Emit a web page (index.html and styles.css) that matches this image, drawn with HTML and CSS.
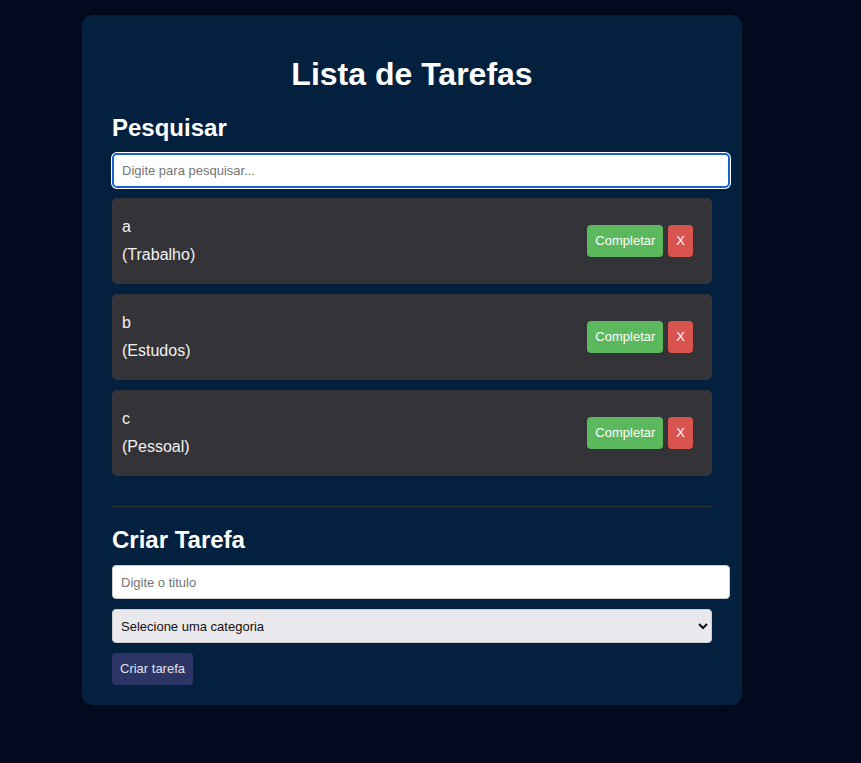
FILE: index.html
```html
<!DOCTYPE html>
<html lang="pt">
<head>
<meta charset="utf-8">
<title>Lista de Tarefas</title>
<link rel="stylesheet" href="styles.css">
</head>
<body>
<div class="page">
  <div class="app">
    <h1 class="title">Lista de Tarefas</h1>
    <section class="search">
      <h2 class="section-title">Pesquisar</h2>
      <input class="field field-focus" type="text" placeholder="Digite para pesquisar...">
    </section>
    <div class="todo-list">
      <div class="todo">
        <div class="todo-content">
          <p class="todo-text">a</p>
          <p class="todo-category">(Trabalho)</p>
        </div>
        <div class="todo-actions">
          <button class="btn btn-complete">Completar</button>
          <button class="btn btn-remove">x</button>
        </div>
      </div>
      <div class="todo">
        <div class="todo-content">
          <p class="todo-text">b</p>
          <p class="todo-category">(Estudos)</p>
        </div>
        <div class="todo-actions">
          <button class="btn btn-complete">Completar</button>
          <button class="btn btn-remove">x</button>
        </div>
      </div>
      <div class="todo">
        <div class="todo-content">
          <p class="todo-text">c</p>
          <p class="todo-category">(Pessoal)</p>
        </div>
        <div class="todo-actions">
          <button class="btn btn-complete">Completar</button>
          <button class="btn btn-remove">x</button>
        </div>
      </div>
    </div>
    <hr class="divider">
    <section class="create">
      <h2 class="section-title">Criar Tarefa</h2>
      <form class="create-form">
        <input class="field" type="text" placeholder="Digite o titulo">
        <select class="select">
          <option>Selecione uma categoria</option>
          <option>Trabalho</option>
          <option>Pessoal</option>
          <option>Estudos</option>
        </select>
        <button type="button" class="btn btn-create">Criar tarefa</button>
      </form>
    </section>
  </div>
</div>
</body>
</html>
```
FILE: styles.css
```css
* {
  box-sizing: border-box;
}

html, body {
  margin: 0;
  padding: 0;
  background: #020b20;
  min-height: 100%;
}

body {
  font-family: "Liberation Sans", Arial, sans-serif;
  color: #fff;
}

.page {
  padding: 15px 0 0 82px;
  min-height: 763px;
}

.app {
  width: 660px;
  padding: 20px 30px;
  background: #03213f;
  border-radius: 10px;
  box-shadow: 0 0 10px rgba(0, 0, 0, 0.5);
}

.title {
  font-size: 32px;
  font-weight: bold;
  text-align: center;
  margin: 21px 0;
  line-height: 37px;
}

.section-title {
  font-size: 24px;
  font-weight: bold;
  margin: 20px 0 11px;
  line-height: 28px;
}

.search .section-title {
  margin-top: 0;
}

.field {
  display: block;
  width: 618px;
  height: 34px;
  padding: 8px;
  font-family: "Liberation Sans", Arial, sans-serif;
  font-size: 13px;
  line-height: 16px;
  color: #222;
  background: #fff;
  border: 1px solid #ccc;
  border-radius: 4px;
  margin: 0 0 10px;
}

.field::placeholder {
  color: #757575;
}

.field-focus {
  height: 35px;
  border: 2px solid #1a62d0;
  box-shadow: 0 0 0 1px #ffffff;
  border-radius: 5px;
  padding: 7px 8px;
  outline: none;
  caret-color: #000;
}

.todo-list {
  display: flex;
  flex-direction: column;
  gap: 10px;
  padding-bottom: 10px;
}

.todo {
  display: flex;
  align-items: center;
  justify-content: space-between;
  background: #343338;
  border-radius: 5px;
  padding: 15px 19px 15px 10px;
}

.todo-content p {
  margin: 0;
  font-size: 16px;
  line-height: 28px;
  color: #f2f2f2;
  font-weight: normal;
}

.todo-actions {
  display: flex;
  gap: 5px;
}

.btn {
  font-family: "Liberation Sans", Arial, sans-serif;
  font-size: 13px;
  line-height: 16px;
  padding: 8px;
  border: none;
  border-radius: 4px;
  color: #fff;
  cursor: pointer;
}

.btn-complete {
  background: #5cb85c;
}

.btn-remove {
  background: #d9534f;
  text-transform: uppercase;
}

.divider {
  border: none;
  border-top: 1px solid #33363b;
  margin: 20px 0 19px;
  height: 0;
}

.create .section-title {
  margin-top: 0;
}

.create-form {
  display: flex;
  flex-direction: column;
  align-items: flex-start;
}

.select {
  display: block;
  width: 600px;
  height: 34px;
  padding: 0 4px;
  font-family: "Liberation Sans", Arial, sans-serif;
  font-size: 13px;
  color: #111;
  background: #e9e8ed;
  border: 1px solid #ccc;
  border-radius: 4px;
  margin: 0 0 10px;
}

.btn-create {
  background: #2c3566;
  color: #e2e2ea;
}
```
